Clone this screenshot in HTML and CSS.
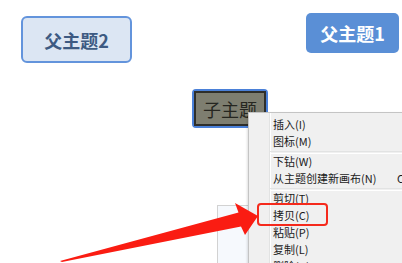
FILE: index.html
```html
<!DOCTYPE html>
<html lang="zh-CN">
<head>
    <meta charset="UTF-8">
    <meta name="viewport" content="width=device-width, initial-scale=1.0">
    <title>思维导图 - 右键菜单</title>
    <link rel="stylesheet" href="styles.css">
</head>
<body>
    <div class="canvas">
        <div class="topic parent2">父主题2</div>
        <div class="topic parent1">父主题1</div>
        <div class="topic child"><span class="child-inner">子主题</span></div>

        <div class="panel"></div>

        <div class="menu">
            <div class="item">插入(I)</div>
            <div class="item">图标(M)</div>
            <div class="sep"></div>
            <div class="item">下钻(W)</div>
            <div class="item"><span class="label">从主题创建新画布(N)</span><span class="key">Ctrl+Alt+N</span></div>
            <div class="sep"></div>
            <div class="item">剪切(T)</div>
            <div class="item">拷贝(C)</div>
            <div class="item">粘贴(P)</div>
            <div class="item">复制(L)</div>
            <div class="item">删除(D)</div>
        </div>

        <div class="mark"></div>

        <svg class="arrow" width="402" height="263" viewBox="0 0 402 263">
            <polygon points="60,261 238.5,212.5 235,203 258,216 245,235 241,226.5 62,262" fill="#fa1c12"/>
        </svg>
    </div>
</body>
</html>
```

FILE: styles.css
```css
*{
    margin: 0;
    padding: 0;
    box-sizing: border-box;
}
body{
    background: #fff;
    font-family: "Noto Sans CJK SC", "Liberation Sans", sans-serif;
}
.canvas{
    position: relative;
    width: 402px;
    height: 263px;
    overflow: hidden;
}
.topic{
    position: absolute;
    display: flex;
    justify-content: center;
    align-items: center;
}
.parent2{
    left: 21px;
    top: 16px;
    width: 111px;
    height: 47px;
    border: 2px solid #6394dc;
    border-radius: 6px;
    background: #dce6f3;
    color: #3d5a82;
    font-size: 18px;
    font-weight: bold;
}
.parent1{
    left: 306px;
    top: 13px;
    width: 93px;
    height: 40px;
    border-radius: 5px;
    background: #5a8fd6;
    color: #fff;
    font-size: 18px;
    font-weight: bold;
}
.child{
    left: 192px;
    top: 89px;
    width: 76px;
    height: 39px;
    border: 2px solid #4a80d8;
    border-radius: 4px;
}
.child-inner{
    width: 100%;
    height: 100%;
    display: flex;
    justify-content: center;
    align-items: center;
    border: 2px solid #2e2e2a;
    background: #7e7e70;
    color: #262620;
    font-size: 18px;
}
.panel{
    position: absolute;
    left: 217px;
    top: 205px;
    width: 40px;
    height: 70px;
    background: #f6f9fd;
    border-left: 1px solid #d2d2d2;
    border-top: 1px solid #d2d2d2;
}
.menu{
    position: absolute;
    left: 248px;
    top: 112px;
    width: 160px;
    height: 170px;
    padding-top: 3px;
    background: linear-gradient(90deg, #f0f0f0 20px, #e2e3e3 20px, #e2e3e3 21px, #fff 21px, #fff 22px, #f0f0f0 22px);
    border-left: 1px solid #c4c4c4;
    border-top: 1px solid #c4c4c4;
    box-shadow: -1px 1px 2px rgba(0, 0, 0, 0.12);
    overflow: hidden;
    font-size: 11px;
    color: #1a1a1a;
}
.item{
    height: 17px;
    line-height: 17px;
    padding-left: 24px;
    display: flex;
    white-space: nowrap;
}
.label{
    flex: 0 0 124px;
}
.sep{
    height: 3px;
    margin-left: 21px;
    border-top: 1px solid #e2e3e3;
    border-bottom: 1px solid #fff;
    margin-top: 1px;
    margin-bottom: -1px;
}
.mark{
    position: absolute;
    left: 257px;
    top: 203px;
    width: 71px;
    height: 23px;
    border: 2.5px solid #f52a1c;
    border-radius: 4px;
}
.arrow{
    position: absolute;
    left: 0;
    top: 0;
}
```
